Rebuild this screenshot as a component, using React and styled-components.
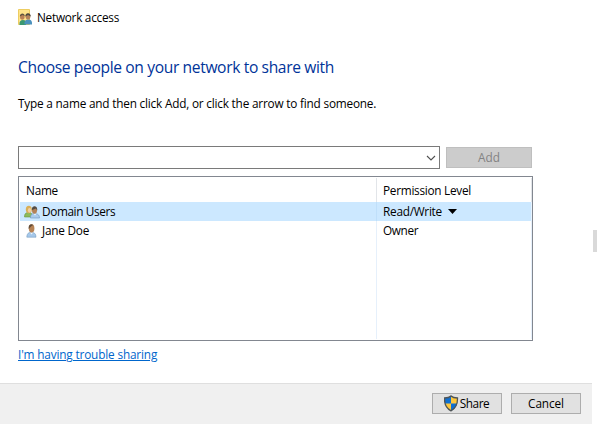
import React from 'react';
import styled, { createGlobalStyle } from 'styled-components';

const GlobalStyle = createGlobalStyle`
  * { box-sizing: border-box; }
  body {
    margin: 0;
    background: #fff;
    overflow: hidden;
    font-family: "Open Sans", "Noto Sans", sans-serif;
    font-size: 11.8px;
    color: #000;
  }
`;

const Page = styled.div`
  position: relative;
  display: flex;
  flex-direction: column;
  width: 597px;
  height: 425px;
`;

const Label = styled.span`
  padding-bottom: 1px;
  line-height: 16px;
  white-space: nowrap;
  letter-spacing: ${({ $track }) => $track || 0}px;
`;

const TitleBar = styled.header`
  display: flex;
  align-items: center;
  height: 18px;
  margin-top: 8px;
  padding-left: 17px;
  gap: 4px;
`;

const Content = styled.main`
  display: flex;
  flex-direction: column;
  width: 515px;
  margin-left: 18px;
`;

const Heading = styled.h1`
  margin: 30px 0 0;
  height: 22px;
  font-size: 15.6px;
  line-height: 22px;
  font-weight: 400;
  letter-spacing: -0.36px;
  color: #003399;
  white-space: nowrap;
`;

const Instruction = styled.p`
  margin: 17px 0 0;
  height: 16px;
  line-height: 16px;
`;

const EntryRow = styled.div`
  display: flex;
  gap: 6px;
  margin-top: 35px;
  height: 23px;
`;

const Combo = styled.div`
  display: flex;
  align-items: center;
  justify-content: flex-end;
  width: 422px;
  height: 23px;
  padding-right: 3px;
  border: 1px solid #7a7a7a;
`;

const Button = styled.button`
  display: flex;
  align-items: center;
  justify-content: center;
  width: ${({ $width }) => $width || 70}px;
  height: 21px;
  margin: 0;
  padding: 0;
  border: 1px solid ${({ disabled }) => (disabled ? '#bfbfbf' : '#adadad')};
  background: ${({ disabled }) => (disabled ? '#cccccc' : '#e1e1e1')};
  color: ${({ disabled }) => (disabled ? '#838383' : '#000')};
  font: inherit;
`;

const AddButton = styled(Button)`
  margin-top: 1px;
`;

const ShareButton = styled(Button)`
  padding-right: 1px;
`;

const List = styled.section`
  display: flex;
  flex-direction: column;
  height: 165px;
  margin-top: 7px;
  padding: 1px;
  border: 1px solid #828790;
`;

const Row = styled.div`
  display: grid;
  grid-template-columns: 357px 155px;
  width: 511px;
  flex: ${({ $height }) => ($height ? `0 0 ${$height}px` : '1')};
  background: ${({ $selected }) => ($selected ? '#cce8ff' : 'transparent')};
`;

const Cell = styled.div`
  display: flex;
  align-items: center;
  gap: ${({ $gap }) => $gap || 0}px;
  padding-left: ${({ $pad }) => $pad || 0}px;
  border-right: 1px solid ${({ $line }) => $line || '#e6f0fb'};
`;

const HelpLink = styled.a`
  align-self: flex-start;
  height: 16px;
  margin-top: 5px;
  line-height: 16px;
  color: #0066cc;
  text-decoration: underline;
  text-decoration-thickness: 1px;
  text-underline-offset: 1px;
`;

const Footer = styled.footer`
  display: flex;
  gap: 9px;
  width: 592px;
  height: 41px;
  margin-top: auto;
  margin-bottom: 1px;
  padding: 9px 11px 0 0;
  justify-content: flex-end;
  border-top: 1px solid #dfdfdf;
  background: #f0f0f0;
`;

const ScrollNub = styled.div`
  position: absolute;
  top: 230px;
  right: 0;
  width: 4px;
  height: 22px;
  background: #d9d9d9;
`;

const NetworkIcon = () => (
  <svg width="16" height="17" viewBox="0 0 16 17">
    <path d="M1.500 .5h11v15h-11z" fill="#ffe48a" stroke="#edcd62" />
    <path d="M2.500 16c-.4-3.500 1-5 3.500-5s3.500 1.500 3 5z" fill="#3b9870" />
    <ellipse cx="5.300" cy="8" rx="2.300" ry="2.700" fill="#b98256" />
    <path d="M2.800 7.500c0-4 5-4 5-.5L5.500 6z" fill="#60533f" />
    <path d="M7.500 15.500c-.3-4 1.500-5 3.800-5s4 1 3.700 5z" fill="#4b91bd" />
    <ellipse cx="11" cy="7.500" rx="2.400" ry="3" fill="#b4835a" />
    <path d="M8.300 7.500c-.3-4.500 5.700-4.500 5.500 0L11 6z" fill="#4e4b40" />
  </svg>
);

const GroupIcon = () => (
  <svg width="16" height="14" viewBox="0 0 16 14">
    <path d="M.5 12c0-3.500 1.500-4.500 4-4.500S9 9 9 12z" fill="#8dbb5c" stroke="#64953c" strokeWidth=".6" />
    <ellipse cx="4.800" cy="4.500" rx="3" ry="3.700" fill="#d9af58" />
    <ellipse cx="5.500" cy="5.300" rx="1.600" ry="2.400" fill="#f0cfa4" />
    <path d="M6.500 13c0-3.500 1.500-4.500 4-4.500s5 1 5 4.500z" fill="#a9cbed" stroke="#6e96bd" strokeWidth=".6" />
    <path d="m9.500 8.500 1.500 2 1.500-2z" fill="#f1f7fc" />
    <ellipse cx="10.500" cy="5.200" rx="2.500" ry="3.500" fill="#b48257" />
    <path d="M8 5c-1-5 6-5.500 5.200.5L12 3.500z" fill="#514c46" />
  </svg>
);

const PersonIcon = () => (
  <svg width="16" height="14" viewBox="0 0 16 14">
    <path d="M2.800 13.200c0-3.500 1.500-4.900 4.500-4.900s4.700 1.400 4.700 4.900z" fill="#a6c8ea" stroke="#799fc3" strokeWidth=".6" />
    <path d="m6 8.500 1.500 2 1.700-2z" fill="#f2f7fb" />
    <ellipse cx="7.600" cy="4.400" rx="2.800" ry="4.100" fill="#b78355" />
    <path d="M4.800 5C3.800 0 8-.5 9.200 1L7 2.500z" fill="#624d3a" />
  </svg>
);

const ShieldIcon = () => (
  <svg width="16" height="17" viewBox="1 0 16 17">
    <path d="M8 1C6.500 2.500 4 3 1.500 3 1.300 9 2.500 13 8 15.800 13.500 13 14.700 9 14.500 3 12 3 9.500 2.500 8 1z" fill="#ffc83d" />
    <path d="M8 1v7.500H2C1.500 6.500 1.500 5 1.500 3 4 3 6.500 2.500 8 1z" fill="#0f6fd1" />
    <path d="M8 8.500h6C13.500 12 11.500 14 8 15.800z" fill="#0f6fd1" />
    <path d="M8 1C6.500 2.500 4 3 1.500 3 1.300 9 2.500 13 8 15.800 13.500 13 14.700 9 14.500 3 12 3 9.500 2.500 8 1z" fill="none" stroke="#4f5558" strokeWidth="1.300" />
  </svg>
);

const Chevron = () => (
  <svg width="10" height="6" viewBox="0 0 10 6">
    <path d="M1 1l4 4 4-4" fill="none" stroke="#505050" strokeWidth="1.100" />
  </svg>
);

const DropArrow = () => (
  <svg width="9" height="5" viewBox="0 0 9 5">
    <path d="M0 0h9L4.500 5z" fill="#000" />
  </svg>
);

export default function App() {
  return (
    <Page>
      <GlobalStyle />
      <TitleBar>
        <NetworkIcon />
        <Label $track={-0.27}>Network access</Label>
      </TitleBar>
      <Content>
        <Heading>Choose people on your network to share with</Heading>
        <Instruction>
          <Label $track={-0.2}>Type a name and then click Add, or click the arrow to find someone.</Label>
        </Instruction>
        <EntryRow>
          <Combo><Chevron /></Combo>
          <AddButton $width={86} disabled><Label>Add</Label></AddButton>
        </EntryRow>
        <List>
          <Row $height={24}>
            <Cell $pad={6} $line="#e2e5e9"><Label $track={-0.25}>Name</Label></Cell>
            <Cell $pad={6} $line="#e2e5e9"><Label $track={-0.27}>Permission Level</Label></Cell>
          </Row>
          <Row $height={19} $selected>
            <Cell $pad={4} $gap={2} $line="#bfdffa"><GroupIcon /><Label $track={-0.38}>Domain Users</Label></Cell>
            <Cell $pad={6} $gap={6} $line="#e6f3ff"><Label $track={-0.26}>Read/Write</Label><DropArrow /></Cell>
          </Row>
          <Row $height={19}>
            <Cell $pad={4} $gap={2}><PersonIcon /><Label $track={-0.23}>Jane Doe</Label></Cell>
            <Cell $pad={6}><Label $track={-0.35}>Owner</Label></Cell>
          </Row>
          <Row><Cell /><Cell /></Row>
        </List>
        <HelpLink><Label $track={-0.16}>I'm having trouble sharing</Label></HelpLink>
      </Content>
      <Footer>
        <ShareButton><ShieldIcon /><Label $track={-0.45}>Share</Label></ShareButton>
        <Button><Label $track={-0.1}>Cancel</Label></Button>
      </Footer>
      <ScrollNub />
    </Page>
  );
}
